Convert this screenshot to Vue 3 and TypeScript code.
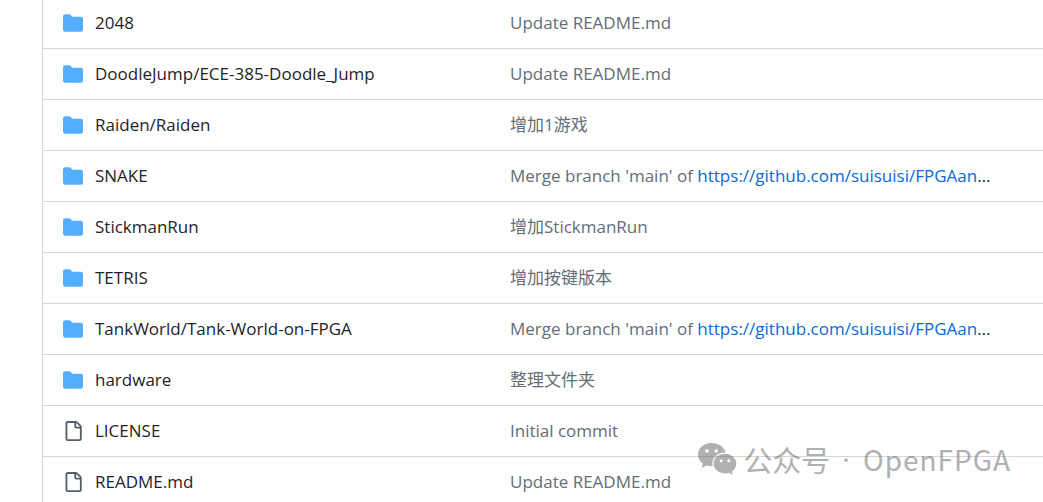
<script setup lang="ts">
interface Entry {
  name: string
  kind: 'dir' | 'file'
  message: string
  link?: string
}

const merge = "Merge branch 'main' of "
const repo = 'https://github.com/suisuisi/FPGAan'

const entries: Entry[] = [
  { name: '2048', kind: 'dir', message: 'Update README.md' },
  { name: 'DoodleJump/ECE-385-Doodle_Jump', kind: 'dir', message: 'Update README.md' },
  { name: 'Raiden/Raiden', kind: 'dir', message: '增加1游戏' },
  { name: 'SNAKE', kind: 'dir', message: merge, link: repo },
  { name: 'StickmanRun', kind: 'dir', message: '增加StickmanRun' },
  { name: 'TETRIS', kind: 'dir', message: '增加按键版本' },
  { name: 'TankWorld/Tank-World-on-FPGA', kind: 'dir', message: merge, link: repo },
  { name: 'hardware', kind: 'dir', message: '整理文件夹' },
  { name: 'LICENSE', kind: 'file', message: 'Initial commit' },
  { name: 'README.md', kind: 'file', message: 'Update README.md' },
]
</script>

<template>
  <main class="page">
    <table class="files">
      <colgroup>
        <col class="col-name" />
        <col />
      </colgroup>
      <tbody>
        <tr v-for="entry in entries" :key="entry.name">
          <td class="name">
            <div class="name-inner">
              <svg v-if="entry.kind === 'dir'" class="icon dir" viewBox="0 0 16 16" aria-hidden="true">
                <path d="M1.75 1A1.75 1.75 0 0 0 0 2.75v10.5C0 14.216.784 15 1.75 15h12.5A1.75 1.75 0 0 0 16 13.25v-8.5A1.75 1.75 0 0 0 14.25 3H7.5a.25.25 0 0 1-.2-.1l-.9-1.2C6.07 1.26 5.55 1 5 1H1.75Z" />
              </svg>
              <svg v-else class="icon file" viewBox="0 0 16 16" aria-hidden="true">
                <path d="M2 1.75C2 .784 2.784 0 3.75 0h6.586c.464 0 .909.184 1.237.513l2.914 2.914c.329.328.513.773.513 1.237v9.586A1.75 1.75 0 0 1 13.25 16h-9.5A1.75 1.75 0 0 1 2 14.25Zm1.75-.25a.25.25 0 0 0-.25.25v12.5c0 .138.112.25.25.25h9.5a.25.25 0 0 0 .25-.25V6h-2.75A1.75 1.75 0 0 1 9 4.25V1.5Zm6.75.062V4.25c0 .138.112.25.25.25h2.688l-.011-.013-2.914-2.914-.013-.011Z" />
              </svg>
              <a class="entry" href="#">{{ entry.name }}</a>
            </div>
          </td>
          <td class="commit">
            <div class="message">
              <a class="muted" href="#">{{ entry.message }}</a><template v-if="entry.link"><a class="link" :href="entry.link">{{ entry.link }}</a>…</template>
            </div>
          </td>
        </tr>
      </tbody>
    </table>

    <div class="watermark">
      <svg class="wechat" viewBox="0 0 40 34" aria-hidden="true">
        <path fill-rule="evenodd" d="M14.5 1C6.8 1 1 6.1 1 12.7c0 3.7 1.9 6.9 4.9 9L4.7 26l4.9-2.5c1.5.5 3.2.7 4.9.7h1.3a10.4 10.4 0 0 1-.4-2.8c0-6.3 5.8-11 12.5-11h.8C27.3 5 21.5 1 14.5 1ZM10 7.2a1.8 1.8 0 1 1 0 3.6 1.8 1.8 0 0 1 0-3.6Zm9.2 0a1.8 1.8 0 1 1 0 3.6 1.8 1.8 0 0 1 0-3.6Z" />
        <path fill-rule="evenodd" d="M27.9 11.8c-6.3 0-11.3 4.3-11.3 9.800s5 9.800 11.3 9.800c1.4 0 2.8-.2 4-.6l4 2.1-1.1-3.5c2.8-1.8 4.5-4.6 4.5-7.8 0-5.5-5.1-9.800-11.4-9.800Zm-3.7 5.500a1.5 1.5 0 1 1 0 3 1.5 1.5 0 0 1 0-3Zm7.6 0a1.5 1.5 0 1 1 0 3 1.5 1.5 0 0 1 0-3Z" />
      </svg>
      <span class="label">公众号</span>
      <span class="dot">·</span>
      <span class="brand">OpenFPGA</span>
    </div>
  </main>
</template>

<style>
body {
  margin: 0;
  background: #fff;
}
</style>

<style scoped>
.page {
  position: relative;
  height: 100vh;
  overflow: hidden;
  padding-left: 42px;
  box-sizing: border-box;
  font-family: "Open Sans", "Noto Sans CJK SC", sans-serif;
  font-size: 17px;
  line-height: 26px;
  color: #1f2328;
}
.files {
  width: 100%;
  margin-top: -2px;
  table-layout: fixed;
  border-collapse: separate;
  border-spacing: 0;
  border-left: 1px solid #d0d7de;
}
.col-name {
  width: 457px;
}
td {
  height: 50px;
  padding: 0;
  border-bottom: 1px solid #d0d7de;
  vertical-align: middle;
}
.name-inner {
  display: flex;
  align-items: center;
  gap: 12px;
  padding-left: 20px;
}
.icon {
  width: 20px;
  height: 20px;
  flex: none;
}
.dir {
  fill: #54aeff;
}
.file {
  fill: #57606a;
}
a {
  text-decoration: none;
}
.entry {
  color: #1f2328;
}
.commit {
  padding: 0 20px 0 10px;
}
.message {
  overflow: hidden;
  text-overflow: ellipsis;
  white-space: pre;
}
.muted {
  color: #656d76;
}
.link {
  color: #0969da;
}
.watermark {
  position: absolute;
  right: 32px;
  bottom: 24px;
  display: flex;
  align-items: center;
  font-family: "Noto Sans CJK SC", sans-serif;
  font-size: 29px;
  line-height: 38px;
  color: #646464;
  opacity: 0.5;
  pointer-events: none;
}
.wechat {
  width: 40px;
  height: 34px;
  margin-right: 6px;
  fill: #646464;
}
.dot {
  margin: 0 13px 0 12px;
  font-family: "Open Sans", sans-serif;
}
.brand {
  font-size: 28px;
  letter-spacing: 1px;
}
</style>
